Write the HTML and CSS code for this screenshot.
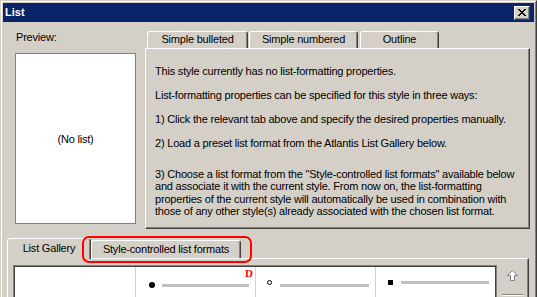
FILE: index.html
```html
<!DOCTYPE html>
<html lang="en">
  <head>
    <meta charset="UTF-8" />
    <meta name="viewport" content="width=device-width, initial-scale=1.0" />
    <link rel="stylesheet" href="styles.css">
    <title>List</title>
  </head>
  <body>
    <div class="window">
      <div class="frame">
        <div class="titlebar">
          <span class="title">List</span>
          <span class="close-btn">
            <svg width="8" height="7" viewBox="0 0 8 7">
              <path d="M0 0h2v1h-2z M6 0h2v1h-2z M1 1h2v1h-2z M5 1h2v1h-2z M2 2h2v1h-2z M4 2h2v1h-2z M3 3h2v1h-2z M2 4h2v1h-2z M4 4h2v1h-2z M1 5h2v1h-2z M5 5h2v1h-2z M0 6h2v1h-2z M6 6h2v1h-2z" fill="#000" />
            </svg>
          </span>
        </div>

        <div class="content">
          <div class="upper">
            <div class="preview">
              <div class="label">Preview:</div>
              <div class="preview-box">(No list)</div>
            </div>

            <div class="tabs">
              <div class="tabstrip">
                <div class="tab tab-bulleted">Simple bulleted</div>
                <div class="tab tab-numbered">Simple numbered</div>
                <div class="tab tab-outline">Outline</div>
              </div>
              <div class="panel info">
                <p>This style currently has no list-formatting properties.</p>
                <p>List-formatting properties can be specified for this style in three ways:</p>
                <p>1) Click the relevant tab above and specify the desired properties manually.</p>
                <p>2) Load a preset list format from the Atlantis List Gallery below.</p>
                <p class="last">3) Choose a list format from the "Style-controlled list formats" available below<br>and associate it with the current style. From now on, the list-formatting<br>properties of the current style will automatically be used in combination with<br>those of any other style(s) already associated with the chosen list format.</p>
              </div>
            </div>
          </div>

          <div class="lower">
            <div class="tabstrip lower-tabs">
              <div class="tab tab-gallery">List Gallery</div>
              <div class="tab tab-style">Style-controlled list formats</div>
              <div class="highlight"></div>
            </div>
            <div class="panel gallery-panel">
              <div class="gallery">
                <div class="gallery-list">
                  <div class="cell cell-first"></div>
                  <div class="cell cell-disc">
                    <span class="marker disc"></span>
                    <span class="bar"></span>
                    <span class="default-mark">D</span>
                  </div>
                  <div class="cell cell-circle">
                    <span class="marker circle"></span>
                    <span class="bar"></span>
                  </div>
                  <div class="cell cell-square">
                    <span class="marker square"></span>
                    <span class="bar"></span>
                  </div>
                </div>
              </div>
              <div class="scroll">
                <svg width="12" height="11" viewBox="0 0 12 11">
                  <path d="M5.5 0.5 L10.5 5.5 L7.5 5.5 L7.5 10.5 L3.5 10.5 L3.5 5.5 L0.5 5.5 Z" fill="#fff" stroke="#808080" />
                </svg>
                <div class="scroll-line"></div>
              </div>
            </div>
          </div>
        </div>
      </div>
    </div>
  </body>
</html>
```

FILE: styles.css
```css
* {
  box-sizing: border-box;
}

body {
  margin: 0;
  background: #d4d0c8;
  color: #000;
  font-family: "Liberation Sans", Arial, sans-serif;
  font-size: 11px;
  letter-spacing: -0.2px;
}

/* the dialog is cut off at the bottom of the shot */
.window {
  width: 537px;
  height: 297px;
  overflow: hidden;
  border: 1px solid;
  border-bottom: 0;
  border-color: #d4d0c8 #404040 #404040 #d4d0c8;
}

.frame {
  height: 100%;
  padding: 1px 1px 0;
  border: 1px solid;
  border-bottom: 0;
  border-color: #fff #808080 #808080 #fff;
}

/* title bar */
.titlebar {
  display: flex;
  justify-content: space-between;
  align-items: center;
  height: 19px;
  padding: 0 4px 0 2px;
  background: #0a246a;
  color: #fff;
}

.title {
  font-weight: bold;
  line-height: 19px;
  letter-spacing: 0;
}

.close-btn {
  display: flex;
  justify-content: center;
  align-items: center;
  width: 16px;
  height: 14px;
  background: #d4d0c8;
  border: 1px solid;
  border-color: #fff #404040 #404040 #fff;
  box-shadow: inset -1px -1px 0 #808080;
}

/* content */
.content {
  padding: 9px 0 0 4px;
}

.upper {
  display: flex;
  margin-left: 8px;
}

.preview {
  width: 130px;
}

.label {
  margin-bottom: 9px;
  padding-left: 1px;
  line-height: 13px;
}

.preview-box {
  display: flex;
  justify-content: center;
  align-items: center;
  width: 121px;
  height: 171px;
  background: #fff;
  border: 1px solid #808080;
}

.tabs {
  width: 385px;
}

.tabstrip {
  display: flex;
  align-items: flex-end;
  height: 17px;
  padding-left: 2px;
}

.tab {
  height: 17px;
  line-height: 15px;
  text-align: center;
  white-space: nowrap;
  border: 1px solid;
  border-bottom: 0;
  border-color: #fff #404040 #fff #fff;
  border-radius: 3px 3px 0 0;
  box-shadow: inset -1px 0 0 #808080;
}

.tab-bulleted {
  width: 101px;
  margin-right: 1px;
}

.tab-numbered {
  width: 109px;
  margin-right: 2px;
}

.tab-outline {
  width: 79px;
}

.panel {
  border: 1px solid;
  border-color: #fff #404040 #404040 #fff;
  box-shadow: inset -1px -1px 0 #808080;
}

.info {
  height: 181px;
  padding: 16px 9px 0;
}

.info p {
  margin: 0 0 11.5px;
  line-height: 12.5px;
  white-space: nowrap;
}

.info .last {
  margin-top: 18px;
}

/* lower part */
.lower {
  margin-top: 9px;
}

.lower-tabs {
  position: relative;
  height: 20px;
  padding-left: 0;
}

.tab-gallery {
  position: relative;
  z-index: 1;
  width: 84px;
  height: 21px;
  margin-bottom: -1px;
  line-height: 18px;
  background: #d4d0c8;
}

.tab-style {
  width: 150px;
  height: 18px;
  line-height: 16px;
}

.highlight {
  position: absolute;
  left: 75px;
  top: -2px;
  z-index: 2;
  width: 170px;
  height: 27px;
  border: 2px solid #f00;
  border-radius: 7px;
}

.gallery-panel {
  display: flex;
  width: 522px;
  height: 40px;
  padding: 6px 0 0 5px;
  border-bottom: 0;
  box-shadow: inset -1px 0 0 #808080;
}

.gallery {
  width: 484px;
  height: 33px;
  border: 1px solid #808080;
  border-bottom: 0;
}

.gallery-list {
  display: flex;
  height: 100%;
  background: #fff;
  border: 1px solid #404040;
  border-bottom: 0;
}

.cell {
  position: relative;
  display: flex;
  align-items: flex-start;
  width: 120px;
  border-right: 1px solid #d4d0c8;
}

.cell-first {
  width: 121px;
}

.cell-disc {
  gap: 7px;
  padding-left: 13px;
}

.cell-circle {
  gap: 8px;
  padding-left: 11px;
}

.cell-square {
  flex: 1;
  gap: 8px;
  padding-left: 12px;
  border-right: 0;
}

.marker {
  display: block;
  flex: none;
  background: #000;
}

.disc {
  width: 6px;
  height: 6px;
  margin-top: 15px;
  border-radius: 50%;
}

.circle {
  width: 5px;
  height: 5px;
  margin-top: 13px;
  background: #fff;
  border: 1px solid #000;
  border-radius: 50%;
}

.square {
  width: 5px;
  height: 5px;
  margin-top: 13px;
}

.bar {
  display: block;
  height: 3px;
  background: #c0c0c0;
}

.cell-disc .bar {
  width: 87px;
  margin-top: 17px;
}

.cell-circle .bar {
  width: 89px;
  margin-top: 17px;
}

.cell-square .bar {
  width: 88px;
  margin-top: 14px;
}

.default-mark {
  position: absolute;
  top: 1px;
  right: 2px;
  color: #f00;
  font-family: "Liberation Serif", "Times New Roman", serif;
  font-size: 11px;
  font-weight: bold;
  line-height: 11px;
  letter-spacing: 0;
}

.scroll {
  display: flex;
  flex-direction: column;
  align-items: center;
  width: 30px;
  padding: 5px 0 0 1px;
}

.scroll-line {
  width: 21px;
  margin-top: 13px;
  border-top: 1px solid #808080;
  border-bottom: 1px solid #fff;
}
```
